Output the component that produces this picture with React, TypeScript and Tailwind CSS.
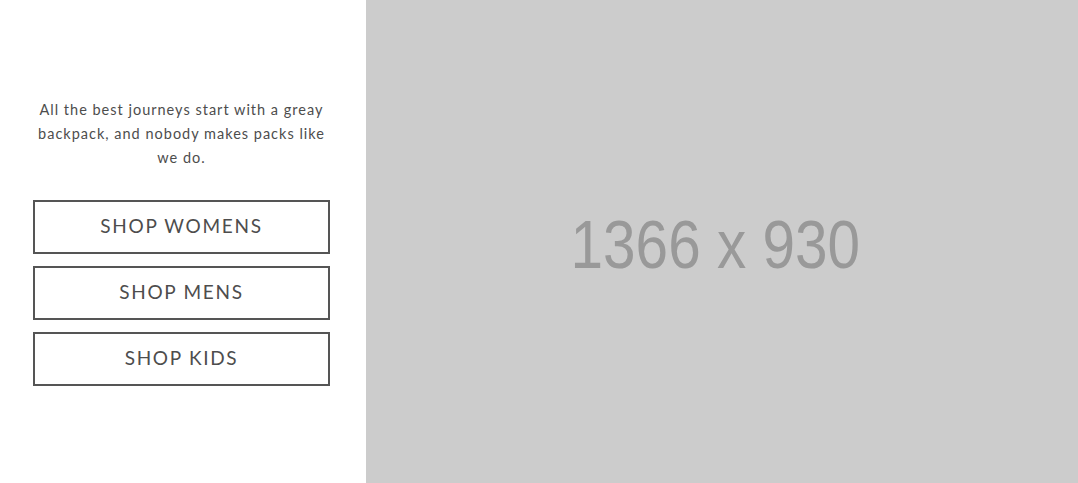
export default function App() {
  const buttons = ["Shop Womens", "Shop Mens", "Shop Kids"];

  return (
    <div className="flex h-[483px] w-full overflow-hidden bg-white">
      <div className="flex w-[366px] shrink-0 flex-col justify-center pl-[33px] pr-[36px] font-['Lato',sans-serif]">
        <p className="mb-[30px] text-center text-[14.5px] leading-[24px] tracking-[1px] text-[#4d4d4d]">
          All the best journeys start with a greay
          <br />
          backpack, and nobody makes packs like
          <br />
          we do.
        </p>
        <div className="flex flex-col gap-[12px]">
          {buttons.map((b) => (
            <a
              key={b}
              href="#"
              className="flex h-[54px] items-center justify-center border-2 border-[#555] text-[19px] uppercase tracking-[1.7px] text-[#4d4d4d]"
            >
              {b}
            </a>
          ))}
        </div>
      </div>
      <div className="flex flex-1 items-center justify-center bg-[#cccccc] pr-[14px] pt-[4px]">
        <span className="inline-block scale-x-[0.86] font-['Liberation_Sans',sans-serif] text-[68px] leading-none text-[#999999]">
          1366 x 930
        </span>
      </div>
    </div>
  );
}
